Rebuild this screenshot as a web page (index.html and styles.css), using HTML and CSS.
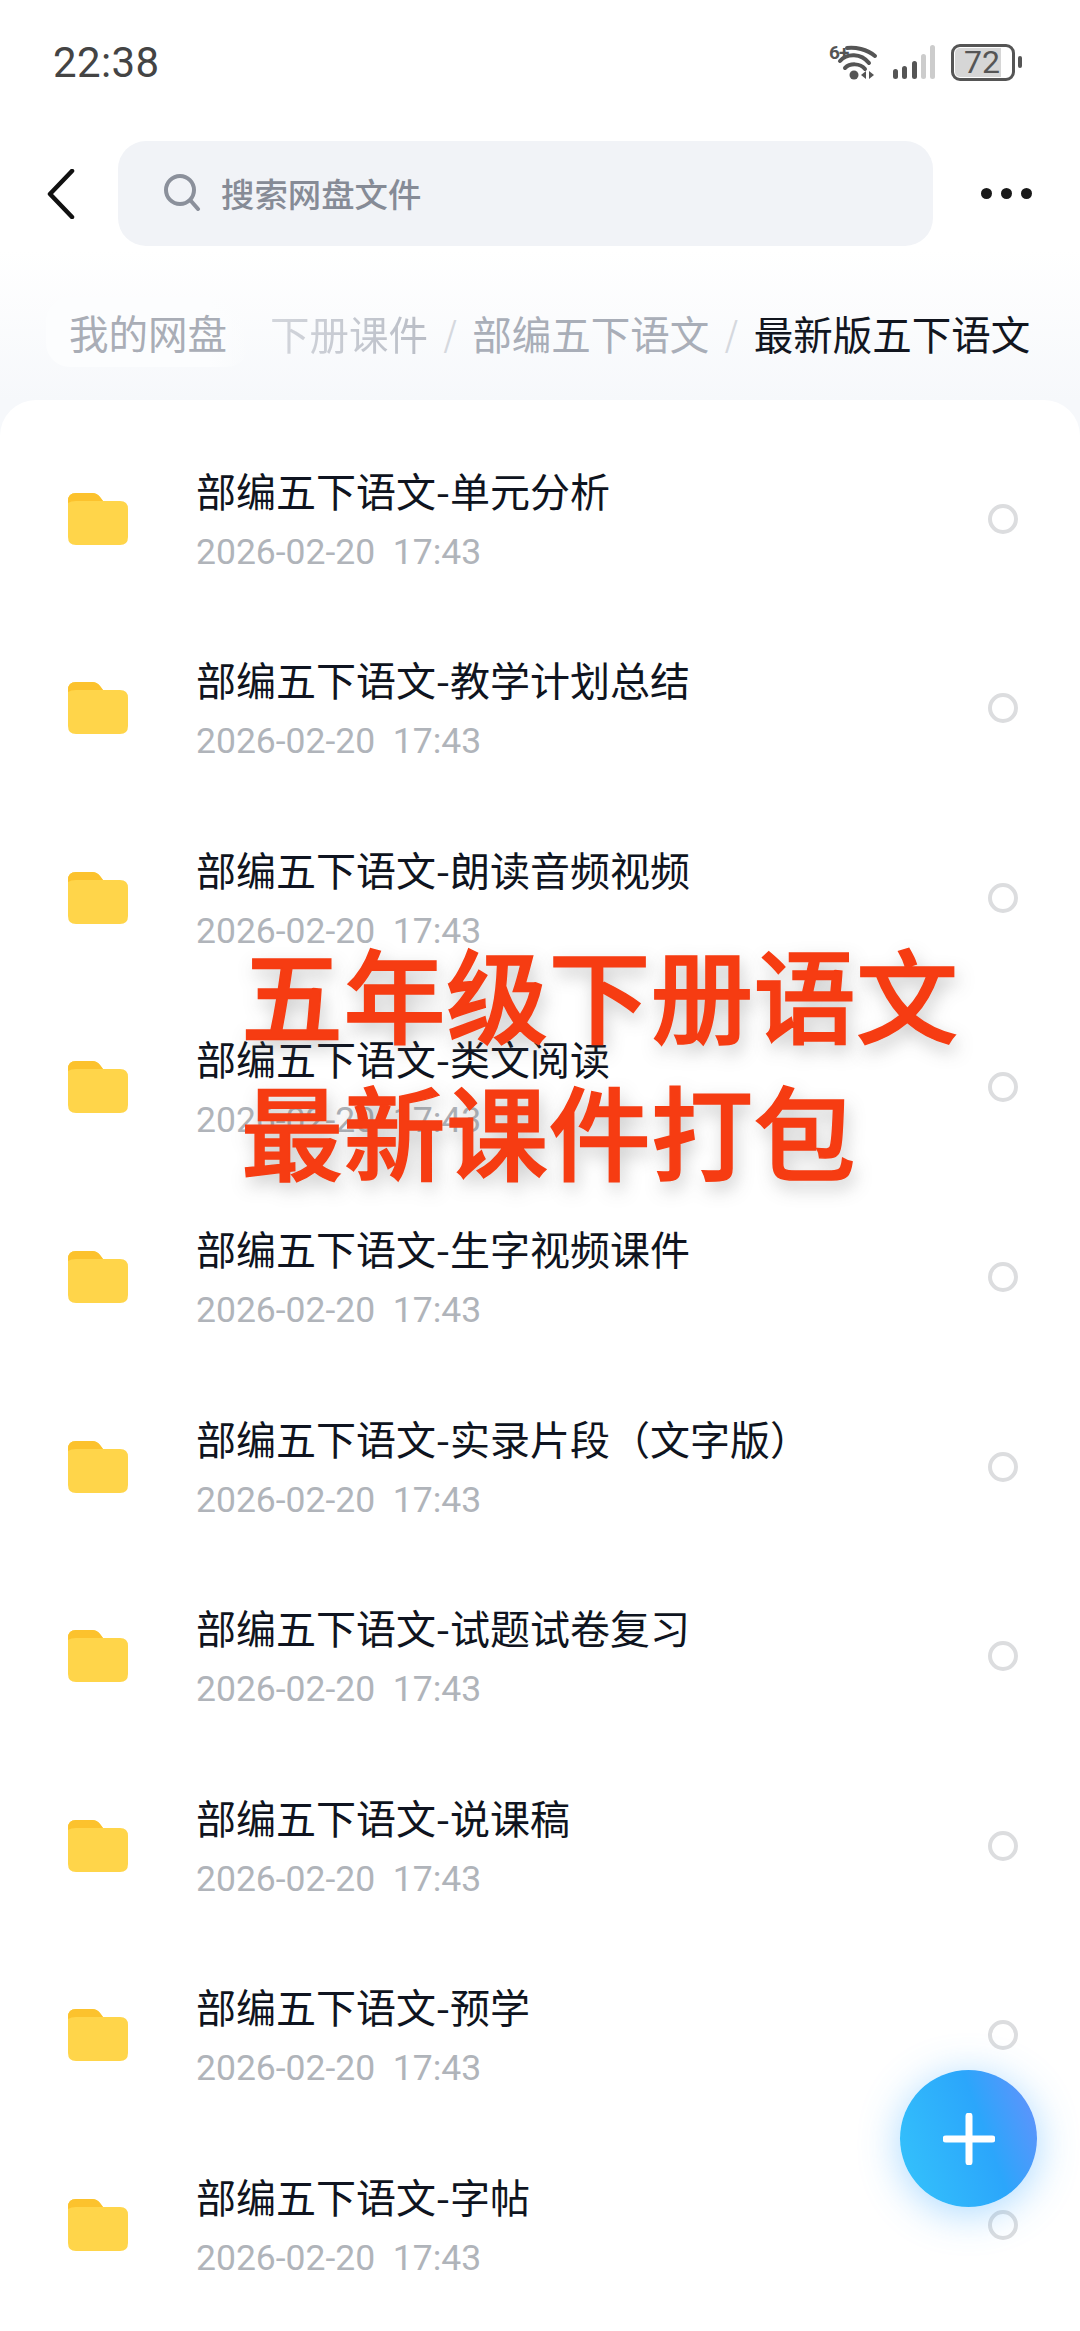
FILE: index.html
```html
<!DOCTYPE html>
<html lang="zh-CN">
<head>
  <meta charset="UTF-8">
  <meta name="viewport" content="width=device-width, initial-scale=1">
  <title>我的网盘</title>
  <link rel="stylesheet" href="styles.css">
</head>
<body>

<div class="status-bar">
  <span class="clock">22:38</span>
  <div class="status-icons">
    <svg class="wifi" width="48" height="36" viewBox="0 0 48 36">
      <text x="0" y="15" class="wifi-label">6+</text>
      <path d="M18 4 C26 3 38 5 46 12" fill="none" stroke="#555" stroke-width="4" stroke-linecap="round"/>
      <path d="M11 17 C18 9 32 9 40 19" fill="none" stroke="#555" stroke-width="4" stroke-linecap="round"/>
      <path d="M16 24 C21 19 31 19 36 25" fill="none" stroke="#555" stroke-width="4" stroke-linecap="round"/>
      <circle cx="25" cy="31" r="4.5" fill="#555"/>
      <path d="M37 27 V35 L32 31 Z M40 27 L45 31 L40 35 Z" fill="#555"/>
    </svg>
    <svg class="signal" width="42" height="34" viewBox="0 0 42 34">
      <rect x="0" y="24" width="5" height="10" rx="2.5" fill="#555"/>
      <rect x="9" y="21" width="5" height="13" rx="2.5" fill="#555"/>
      <rect x="19" y="16" width="5" height="18" rx="2.5" fill="#555"/>
      <rect x="28" y="9" width="5" height="25" rx="2.5" fill="#ccc"/>
      <rect x="37" y="0" width="5" height="34" rx="2.5" fill="#ccc"/>
    </svg>
    <div class="battery">
      <div class="battery-body"><span class="battery-level">72</span></div>
      <div class="battery-tip"></div>
    </div>
  </div>
</div>

<div class="toolbar">
  <svg class="back" width="28" height="50" viewBox="0 0 28 50">
    <path d="M25 2 L3 25 L25 48" fill="none" stroke="#111" stroke-width="4.5" stroke-linecap="round" stroke-linejoin="round"/>
  </svg>
  <div class="search">
    <svg width="38" height="38" viewBox="0 0 38 38">
      <circle cx="17" cy="17" r="14" fill="none" stroke="#8b909b" stroke-width="4"/>
      <path d="M28 28 L35 36" stroke="#8b909b" stroke-width="4" stroke-linecap="round"/>
    </svg>
    <span>搜索网盘文件</span>
  </div>
  <div class="more"><i></i><i></i><i></i></div>
</div>

<div class="crumbs">
  <span class="crumb-root">我的网盘</span>
  <span class="crumb-faded">下册课件</span>
  <span class="crumb-sep">/</span>
  <span class="crumb-mid">部编五下语文</span>
  <span class="crumb-sep">/</span>
  <span class="crumb-current">最新版五下语文</span>
</div>

<div class="card" id="list"></div>

<div class="promo">
  <div>五年级下册语文</div>
  <div>最新课件打包</div>
</div>

<div class="fab">
  <svg width="52" height="52" viewBox="0 0 52 52">
    <path d="M26 3 V49 M3 26 H49" stroke="#fff" stroke-width="7" stroke-linecap="round"/>
  </svg>
</div>

<script>
  const names = [
    "单元分析", "教学计划总结", "朗读音频视频", "类文阅读", "生字视频课件",
    "实录片段（文字版）", "试题试卷复习", "说课稿", "预学", "字帖"
  ];
  const list = document.getElementById("list");
  names.forEach(function (name) {
    const row = document.createElement("div");
    row.className = "row";
    row.innerHTML = `
      <svg class="folder" width="60" height="52" viewBox="0 0 60 52">
        <path d="M0 8 Q0 0 8 0 H24 Q29 0 32 4 L35 8 H52 Q60 8 60 16 V44 Q60 52 52 52 H8 Q0 52 0 44 Z" fill="#ffd54a"/>
        <path d="M0 8 Q0 0 8 0 H24 Q29 0 32 4 L35 8 H8 Q3 8 0 10 Z" fill="#fcc22d"/>
      </svg>
      <div class="row-text">
        <div class="row-title">部编五下语文-${name}</div>
        <div class="row-date">2026-02-20  17:43</div>
      </div>
      <div class="check"></div>
    `;
    list.appendChild(row);
  });
</script>

</body>
</html>
```

FILE: styles.css
```css
html, body {
  margin: 0;
  height: 2331px;
  overflow: hidden;
}
body {
  position: relative;
  font-family: "Noto Sans CJK SC", "Noto Sans", sans-serif;
  background: linear-gradient(#ffffff 0, #ffffff 250px, #f6f8fb 400px);
}

.status-bar {
  height: 124px;
  box-sizing: border-box;
  padding: 0 58px 0 53px;
  display: flex;
  justify-content: space-between;
  align-items: center;
}
.clock {
  font-family: Roboto, sans-serif;
  font-size: 42px;
  color: #444;
  letter-spacing: 0.4px;
}
.status-icons {
  display: flex;
  align-items: center;
  gap: 16px;
}
.wifi {
  overflow: visible;
}
.wifi-label {
  font-family: Roboto, sans-serif;
  font-size: 19px;
  font-weight: 700;
  letter-spacing: -1px;
  fill: #555;
}
.battery {
  display: flex;
  align-items: center;
  gap: 3px;
}
.battery-body {
  width: 64px;
  height: 37px;
  box-sizing: border-box;
  border: 3px solid #555;
  border-radius: 9px;
  padding: 1px;
  display: flex;
}
.battery-level {
  width: 46px;
  box-sizing: border-box;
  padding-left: 9px;
  background: #d6d6d6;
  border-radius: 5px 0 0 5px;
  font-family: Roboto, sans-serif;
  font-size: 32px;
  line-height: 29px;
  color: #555;
}
.battery-tip {
  width: 4px;
  height: 12px;
  background: #555;
  border-radius: 2px;
}

.toolbar {
  height: 105px;
  margin-top: 17px;
  padding: 0 47px 0 47px;
  display: flex;
  align-items: center;
}
.back {
  margin-right: 43px;
}
.search {
  width: 815px;
  height: 105px;
  box-sizing: border-box;
  padding: 0 0 3px 45px;
  background: #f1f3f7;
  border-radius: 28px;
  display: flex;
  align-items: center;
  gap: 20px;
  font-size: 33.4px;
  font-weight: 500;
  color: #868b96;
}
.more {
  margin-left: 48px;
  display: flex;
  gap: 9px;
}
.more i {
  width: 11px;
  height: 11px;
  border-radius: 50%;
  background: #1a1a1a;
}

.crumbs {
  margin-top: 51px;
  height: 70px;
  padding-left: 46px;
  display: flex;
  align-items: center;
  font-size: 39.5px;
  white-space: nowrap;
}
.crumb-root {
  padding: 0 23px;
  height: 70px;
  line-height: 70px;
  color: #a9adb6;
  background: linear-gradient(90deg, #fcfdfe 80%, rgba(252,253,254,0));
  border-radius: 24px;
}
.crumb-faded {
  margin-left: 20px;
  background: linear-gradient(90deg, #d3d6dc, #b9bdc6);
  -webkit-background-clip: text;
  background-clip: text;
  color: transparent;
}
.crumb-sep {
  margin: 0 15.5px;
  color: #d5d8de;
  font-size: 34px;
}
.crumb-mid {
  color: #a9aeb8;
}
.crumb-current {
  color: #12161f;
}

.card {
  margin-top: 33px;
  height: 1931px;
  box-sizing: border-box;
  padding-top: 24px;
  background: #fff;
  border-radius: 36px 36px 0 0;
}
.row {
  height: 189.55px;
  padding: 0 62px 0 68px;
  display: flex;
  align-items: center;
}
.folder {
  flex: none;
}
.row-text {
  flex: 1;
  margin-left: 68px;
  margin-top: -2px;
}
.row-title {
  font-size: 40px;
  line-height: 56px;
  color: #0f1420;
}
.row-date {
  margin-top: 12px;
  font-family: Roboto, sans-serif;
  font-size: 35.5px;
  line-height: 44px;
  color: #b0b4ba;
  white-space: pre;
}
.check {
  width: 30px;
  height: 30px;
  box-sizing: border-box;
  border: 4px solid #dcdddf;
  border-radius: 50%;
}

.promo {
  position: absolute;
  left: 241px;
  top: 923px;
  font-size: 102px;
  line-height: 137px;
  font-weight: 500;
  -webkit-text-stroke: 1.5px #f63c12;
  letter-spacing: 0.5px;
  color: #f63c12;
  text-shadow: 3px 8px 18px rgba(90, 90, 90, 0.35);
  white-space: nowrap;
}

.fab {
  position: absolute;
  left: 900px;
  top: 2070px;
  width: 137px;
  height: 137px;
  border-radius: 50%;
  background: linear-gradient(70deg, #35c4fb 0%, #2ba6fb 60%, #6a8ffb 100%);
  box-shadow: 0 6px 40px rgba(64, 170, 255, 0.45);
  display: flex;
  align-items: center;
  justify-content: center;
}
```
